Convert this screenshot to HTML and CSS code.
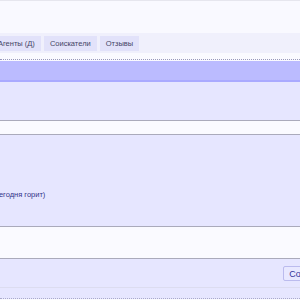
FILE: index.html
```html
<!DOCTYPE html>
<html lang="ru">
<head>
    <meta charset="UTF-8">
    <title>Анкета</title>
    <link rel="stylesheet" href="styles.css">
</head>
<body>

<div class="topbar"></div>

<div class="tabs">
    <a class="tab" href="#">Агенты (Д)</a>
    <a class="tab" href="#">Соискатели</a>
    <a class="tab" href="#">Отзывы</a>
</div>

<div class="tabs-gap"></div>

<div class="panel">
    <div class="panel-header"></div>
    <div class="panel-body">
        <div class="field">
            <input class="text-input" type="text">
        </div>

        <div class="field-label">(Сегодня горит)</div>

        <div class="field">
            <textarea class="text-area"></textarea>
        </div>

        <div class="actions">
            <button class="btn" type="button">Сохранить</button>
        </div>
    </div>
</div>

</body>
</html>
```

FILE: styles.css
```css
body {
    margin: 0;
    background-color: #f9f9ff;
    font-family: "Liberation Sans", Arial, sans-serif;
    font-size: 7.5px;
    color: #333366;
    overflow: hidden;
}

.topbar {
    height: 32px;
    border-top: 1px solid #e6e6ee;
}

/* Вкладки */
.tabs {
    display: flex;
    gap: 3px;
    height: 20px;
    padding: 3px 0 0 0;
    box-sizing: border-box;
    margin-left: -8px;
    background-color: #f0f0fc;
}

.tab {
    display: flex;
    align-items: center;
    height: 15px;
    padding: 0 6px;
    background-color: #e2e2fa;
    color: #444466;
    text-decoration: none;
    white-space: nowrap;
}

.tabs-gap {
    height: 6px;
    background-color: #fafaff;
    border-bottom: 1px dotted #9999bb;
}

.panel {
    margin-top: 1px;
}

.panel-header {
    height: 19px;
    background-color: #bbbbff;
    border-bottom: 2px solid #aaaaff;
}

.panel-body {
    background-color: #e6e6ff;
    padding-top: 38px;
    border-bottom: 1px dotted #aaaacc;
}

.field {
    margin: 0 -10px;
}

.text-input,
.text-area {
    display: block;
    width: 100%;
    box-sizing: border-box;
    margin: 0;
    background-color: #fafaff;
    border: none;
    border-top: 1px solid #aaaabb;
    border-bottom: 1px solid #aaaabb;
    font: inherit;
}

.text-input {
    height: 15px;
}

.text-area {
    height: 33px;
    resize: none;
}

.field-label {
    margin: 55px 0 0 -9px;
    height: 36px;
    color: #333388;
}

.actions {
    display: flex;
    justify-content: flex-end;
    margin-right: -40px;
    padding: 7px 0 6px 0;
    border-bottom: 1px solid #dcdcf0;
    margin-bottom: 10px;
}

.btn {
    height: 15px;
    padding: 0 5px;
    background-color: #e8e8ff;
    border: 1px solid #bbbbee;
    border-radius: 2px;
    color: #333399;
    font: inherit;
    font-size: 9px;
}
```
